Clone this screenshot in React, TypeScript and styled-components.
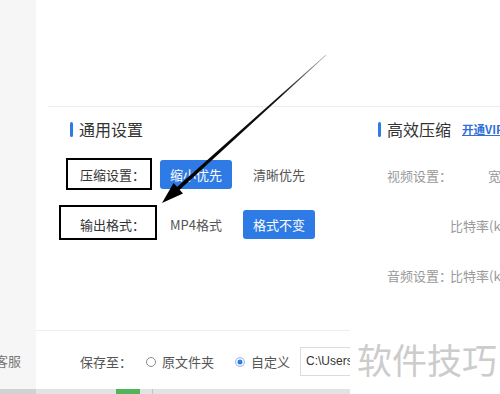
import React from 'react';
import styled, {createGlobalStyle, css} from "styled-components";

const GlobalStyle = createGlobalStyle`
  html, body {
    margin: 0;
    padding: 0;
    background: #ffffff;
  }
  body {
    font-family: "Noto Sans CJK SC", "Noto Sans", sans-serif;
  }
`

type Box = { l: number, t: number, w: number, h: number }

const App = () => {
    return (
        <Page>
            <GlobalStyle/>
            <Sidebar>
                <Service>客服</Service>
                <SideStrip/>
            </Sidebar>
            <Main>
                <TopArea/>
                <Settings>
                    <Column>
                        <Header>通用设置</Header>
                        <Rows>
                            <Row>
                                <Label $box={{l: -14, t: -2, w: 86, h: 32}}>压缩设置：</Label>
                                <Options>
                                    <Option $active>缩小优先</Option>
                                    <Option>清晰优先</Option>
                                </Options>
                            </Row>
                            <Row $gap={21}>
                                <Label $box={{l: -21, t: -5, w: 98, h: 35}}>输出格式：</Label>
                                <Options>
                                    <Option>MP4格式</Option>
                                    <Option $active>格式不变</Option>
                                </Options>
                            </Row>
                        </Rows>
                    </Column>
                    <Column>
                        <Header>
                            高效压缩
                            <VipLink>开通VIP</VipLink>
                        </Header>
                        <RightRows>
                            <RightRow>
                                <RLabel>视频设置：</RLabel>
                                <RValue $offset={38}>宽度(px)：</RValue>
                            </RightRow>
                            <RightRow>
                                <RLabel/>
                                <RValue>比特率(kbps)：</RValue>
                            </RightRow>
                            <RightRow>
                                <RLabel>音频设置：</RLabel>
                                <RValue>比特率(kbps)：</RValue>
                            </RightRow>
                        </RightRows>
                    </Column>
                </Settings>
                <Bottom>
                    <SaveBar>
                        <SaveLabel>保存至：</SaveLabel>
                        <Radio/>
                        <RadioText>原文件夹</RadioText>
                        <Radio $checked/>
                        <RadioText>自定义</RadioText>
                        <PathInput>C:\Users</PathInput>
                    </SaveBar>
                    <Strip>
                        <GreenTab/>
                        <StripTick/>
                    </Strip>
                </Bottom>
            </Main>
            <Watermark>软件技巧</Watermark>
            <Arrow width="500" height="394" viewBox="0 0 500 394">
                <defs>
                    <linearGradient id="fade" x1="326" y1="55" x2="176" y2="191" gradientUnits="userSpaceOnUse">
                        <stop offset="0" stopColor="#b0b0b0"/>
                        <stop offset="0.3" stopColor="#111"/>
                        <stop offset="1" stopColor="#000"/>
                    </linearGradient>
                </defs>
                <polygon points="326.2,55.2 325.8,54.8 174.1,189.4 176.7,192.4" fill="url(#fade)"/>
                <polygon points="162,203 173.6,183.1 183,193.5" fill="#000"/>
            </Arrow>
        </Page>
    );
};

export default App;

const Page = styled.div`
  position: relative;
  width: 500px;
  height: 394px;
  overflow: hidden;
  display: flex;
  background: #fff;
`
const Sidebar = styled.div`
  width: 36px;
  flex-shrink: 0;
  background: #f6f6f6;
  display: flex;
  flex-direction: column;
  justify-content: flex-end;
`
const Service = styled.div`
  margin-left: -5px;
  margin-bottom: 18px;
  font-size: 13px;
  line-height: 20px;
  color: #777;
  white-space: nowrap;
`
const SideStrip = styled.div`
  height: 5px;
  background: #d2d2d2;
`
const Main = styled.div`
  flex: 1;
  display: flex;
  flex-direction: column;
  min-width: 0;
`
const TopArea = styled.div`
  height: 106px;
  flex-shrink: 0;
`
const Settings = styled.div`
  margin-left: 12px;
  border-top: 1px solid #ececec;
  padding: 11px 0 0 22px;
  flex: 1;
  display: grid;
  grid-template-columns: 308px 1fr;
`
const Column = styled.div`
  display: flex;
  flex-direction: column;
  min-width: 0;
`
const Header = styled.div`
  display: flex;
  align-items: center;
  gap: 6px;
  height: 22px;
  font-size: 16px;
  color: #333;
  white-space: nowrap;

  &::before {
    content: "";
    flex-shrink: 0;
    width: 3px;
    height: 15px;
    border-radius: 1.5px;
    background: #2f7be5;
  }
`
const VipLink = styled.span`
  margin-left: 5px;
  font-size: 11.5px;
  font-weight: 700;
  color: #2f6fd8;
  text-decoration: underline;
`
const Rows = styled.div`
  display: flex;
  flex-direction: column;
  padding: 20px 0 0 10px;
`
const Row = styled.div<{ $gap?: number }>`
  display: flex;
  align-items: center;
  height: 29px;
  margin-top: ${p => p.$gap ?? 0}px;
`
const Label = styled.div<{ $box?: Box }>`
  position: relative;
  width: 80px;
  flex-shrink: 0;
  font-size: 13px;
  color: #333;
  white-space: nowrap;

  ${p => p.$box && css`
    &::after {
      content: "";
      position: absolute;
      left: ${p.$box.l}px;
      top: calc(50% - 14.5px + ${p.$box.t}px);
      width: ${p.$box.w}px;
      height: ${p.$box.h}px;
      box-sizing: border-box;
      border: 2.5px solid #000;
    }
  `}
`
const Options = styled.div`
  display: flex;
  gap: 11px;
`
const Option = styled.div<{ $active?: boolean }>`
  padding: 0 10px;
  height: 29px;
  line-height: 29px;
  font-size: 13px;
  border-radius: 3px;
  white-space: nowrap;
  color: ${p => p.$active ? '#fff' : '#555'};
  background: ${p => p.$active ? '#2f7be5' : 'transparent'};
`
const RightRows = styled.div`
  display: flex;
  flex-direction: column;
  padding: 10px 0 0 9px;
`
const RightRow = styled.div`
  display: flex;
  align-items: center;
  height: 50px;
  white-space: nowrap;
`
const RLabel = styled.div`
  width: 63px;
  flex-shrink: 0;
  font-size: 13px;
  color: #9a9a9a;
`
const RValue = styled.div<{ $offset?: number }>`
  flex-shrink: 0;
  margin-left: ${p => p.$offset ?? 0}px;
  font-size: 13px;
  color: #9a9a9a;
`
const Bottom = styled.div`
  width: 314px;
  height: 63px;
  flex-shrink: 0;
  border-top: 1px solid #efefef;
  display: flex;
  flex-direction: column;
  overflow: hidden;
`
const SaveBar = styled.div`
  flex: 1;
  display: flex;
  align-items: center;
  padding: 3px 0 0 44px;
  white-space: nowrap;

  & > * {
    flex-shrink: 0;
  }
`
const SaveLabel = styled.div`
  width: 66px;
  font-size: 13px;
  color: #555;
`
const Radio = styled.span<{ $checked?: boolean }>`
  width: 10px;
  height: 10px;
  box-sizing: border-box;
  border-radius: 50%;
  margin-right: 6px;
  border: 1px solid ${p => p.$checked ? '#a9c5f3' : '#8a8a8a'};
  background: ${p => p.$checked ? '#2f7be5' : '#fff'};
  box-shadow: ${p => p.$checked ? 'inset 0 0 0 1.5px #fff' : 'none'};
  margin-left: ${p => p.$checked ? '21px' : '0'};
`
const RadioText = styled.span`
  font-size: 13px;
  color: #555;
`
const PathInput = styled.div`
  margin-left: 10px;
  width: 60px;
  height: 29px;
  line-height: 27px;
  box-sizing: border-box;
  border: 1px solid #dcdcdc;
  border-right: none;
  padding: 0 0 0 5px;
  overflow: hidden;
  font-family: "Liberation Sans", "Noto Sans", sans-serif;
  font-size: 12px;
  color: #333;
`
const Strip = styled.div`
  height: 5px;
  display: flex;
  background: #e3e3e3;
`
const GreenTab = styled.div`
  margin-left: 80px;
  width: 24px;
  background: #52b45a;
`
const StripTick = styled.div`
  margin-left: 12px;
  width: 1px;
  background: #c4c4c4;
`
const Watermark = styled.div`
  position: absolute;
  left: 357px;
  top: 337px;
  font-size: 35px;
  line-height: 44px;
  color: #cccccc;
  white-space: nowrap;
  pointer-events: none;
`
const Arrow = styled.svg`
  position: absolute;
  left: 0;
  top: 0;
  pointer-events: none;
`
